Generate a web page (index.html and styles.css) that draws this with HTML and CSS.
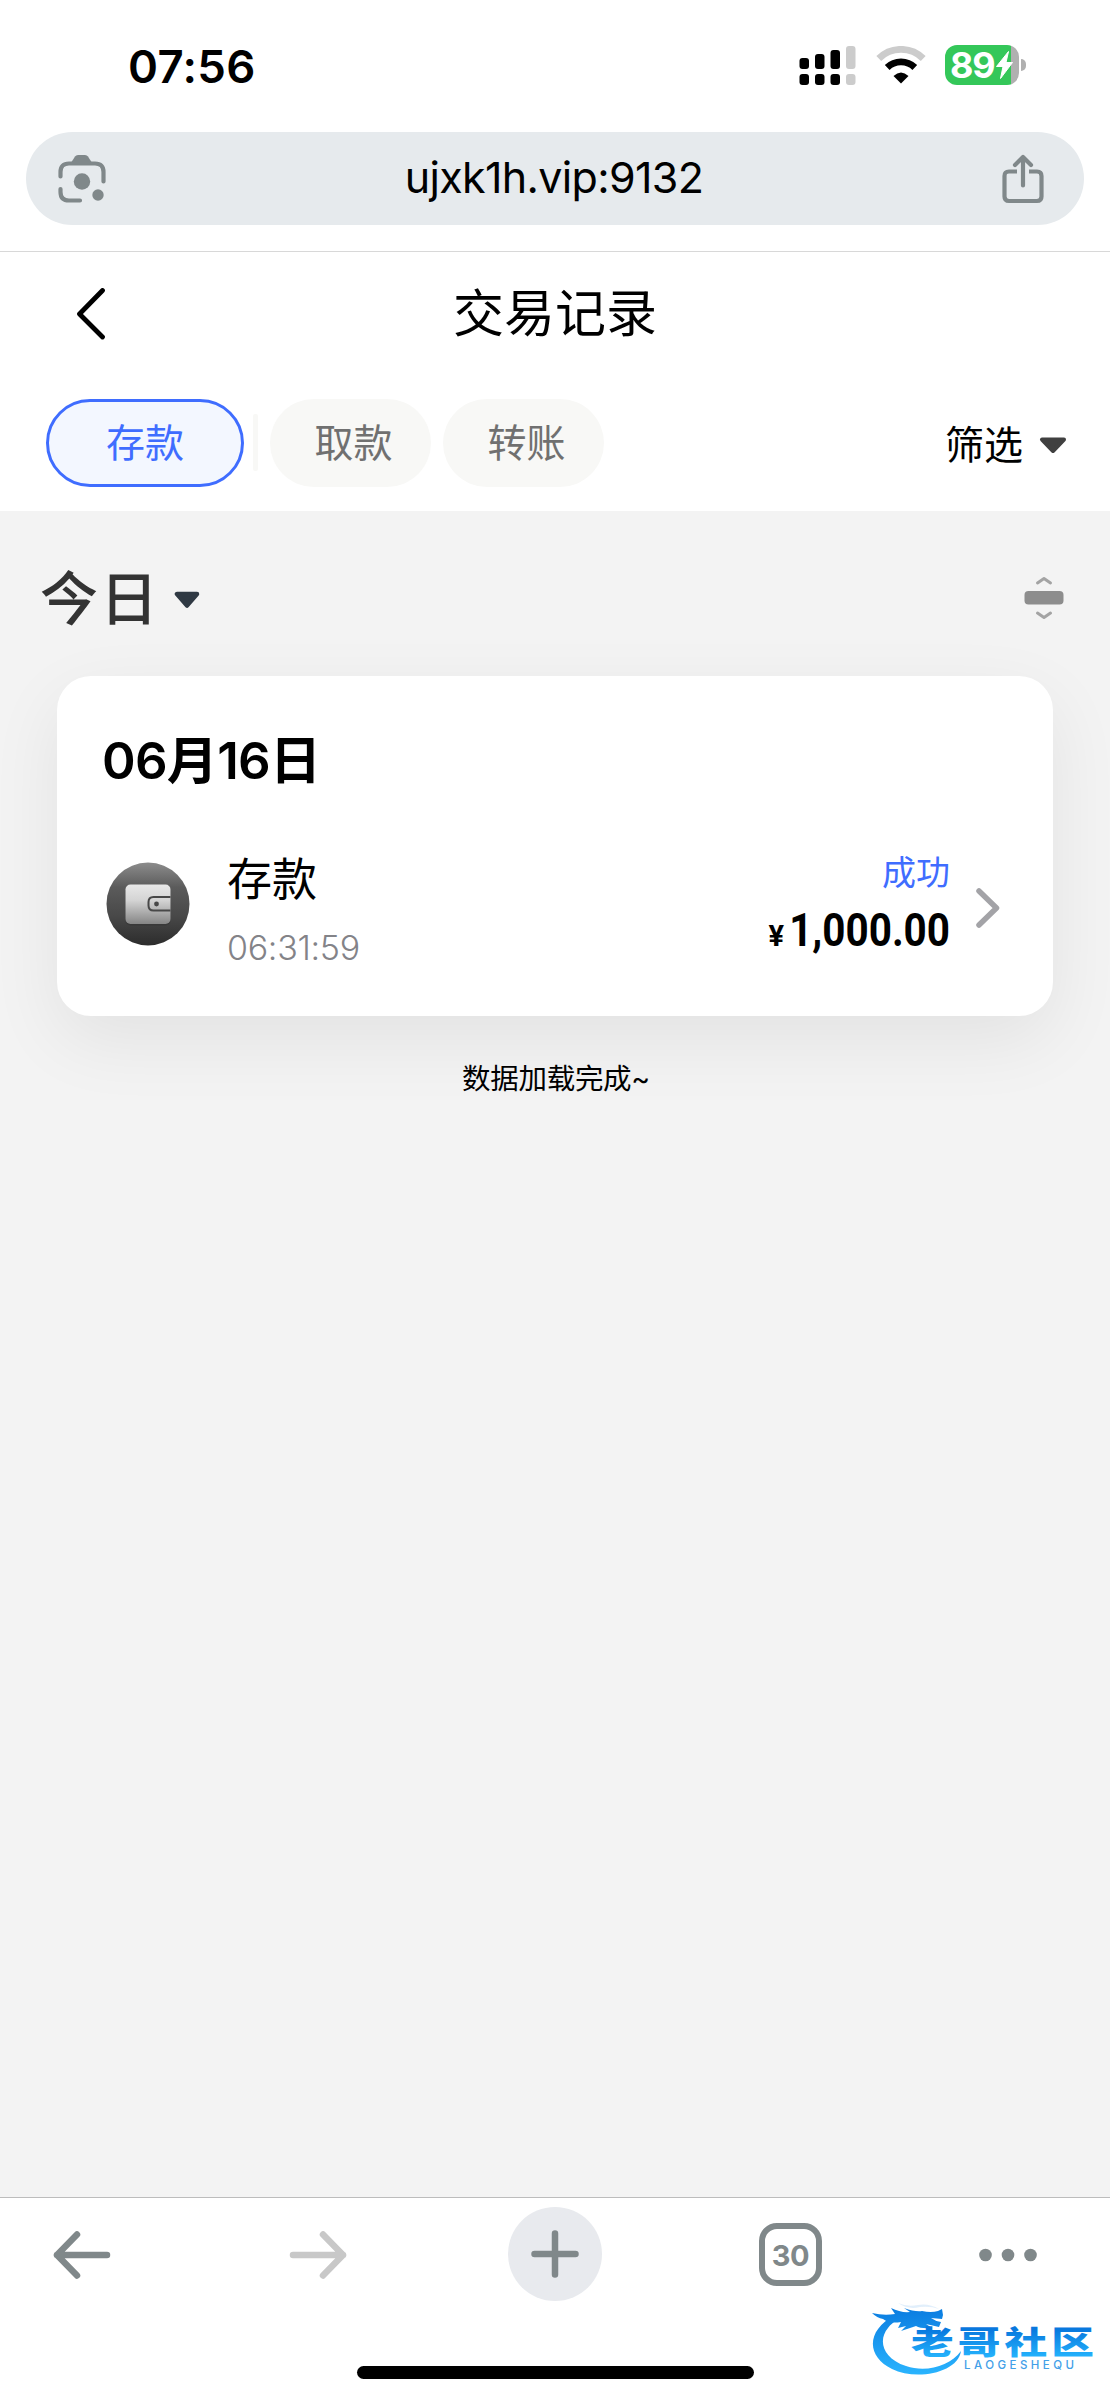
FILE: index.html
```html
<!DOCTYPE html>
<html lang="zh-CN">
<head>
<meta charset="utf-8">
<title>交易记录</title>
<link rel="stylesheet" href="styles.css">
</head>
<body>
<div class="screen">
  <div class="status">
    <span class="clock">07:56</span>
    <div class="status-icons">
      <svg class="signal" width="58" height="40" viewBox="0 0 58 40">
        <rect x="0.500" y="13" width="9.500" height="11" rx="3"/><rect x="16" y="9" width="9.500" height="15" rx="3"/><rect x="31.500" y="5" width="9.500" height="19" rx="3"/>
        <rect x="0.500" y="29" width="9.500" height="11" rx="3"/><rect x="16" y="29" width="9.500" height="11" rx="3"/><rect x="31.500" y="29" width="9.500" height="11" rx="3"/>
        <rect x="47" y="1" width="9.500" height="23" rx="3" fill="#ccc"/><rect x="47" y="29" width="9.500" height="11" rx="3" fill="#ccc"/>
      </svg>
      <svg class="wifi" width="50" height="38" viewBox="0 0 50 38">
        <path d="M2.800 12.500A31.500 31.500 0 0 1 47.200 12.500" fill="none" stroke="#ccc" stroke-width="6.800"/>
        <path d="M11.200 21.500A19.800 19.800 0 0 1 38.800 21.500" fill="none" stroke="#000" stroke-width="6.800"/>
        <path d="M25 37.500L17.500 30Q25 23 32.500 30Z"/>
      </svg>
      <div class="battery"><span class="battery-level">89</span>
        <svg class="bolt" width="17" height="28" viewBox="0 0 17 28"><path d="M12.500 0.500L0.500 15.500H7L4.500 27.500L16.500 11.500H10Z" fill="#fff" stroke="#fff" stroke-linejoin="round"/></svg>
      </div>
      <span class="battery-nub"></span>
    </div>
  </div>

  <div class="address">
    <svg width="48" height="50" viewBox="0 0 48 50" fill="#80888a">
      <path d="M13.500 8L17 2.500Q18 1 20 1H27Q29 1 30 2.500L33.500 8V11H13.500Z"/>
      <path d="M2.500 22.500V18Q2.500 9.500 11 9.500H37Q45.500 9.500 45.500 18V27.500M2.500 35V38Q2.500 46.500 11 46.500H22" fill="none" stroke="#80888a" stroke-width="4.200" stroke-linecap="round"/>
      <circle cx="24" cy="27.500" r="8.200"/><circle cx="40" cy="41" r="5.700"/>
    </svg>
    <span class="url">ujxk1h.vip:9132</span>
    <svg width="42" height="50" viewBox="0 0 42 50" fill="none" stroke="#80888a" stroke-width="4.200">
      <path d="M15 17.500H7Q2.500 17.500 2.500 22V42.500Q2.500 47 7 47H35Q39.500 47 39.500 42.500V22Q39.500 17.500 35 17.500H27"/>
      <path d="M21 31.500V4M13 11L21 3L29 11" stroke-linecap="round" stroke-linejoin="round"/>
    </svg>
  </div>

  <div class="titlebar">
    <svg class="back" width="30" height="52" viewBox="0 0 30 52"><path d="M26.500 2.500L3.500 26L26.500 49" fill="none" stroke="#000" stroke-width="4.800" stroke-linecap="round" stroke-linejoin="round"/></svg>
    <h1>交易记录</h1>
  </div>

  <div class="tabs">
    <span class="tab tab-active">存款</span>
    <span class="tab-divider"></span>
    <span class="tab">取款</span>
    <span class="tab">转账</span>
    <span class="filter">筛选</span>
    <svg class="filter-arrow" width="28" height="17" viewBox="0 0 28 17"><path d="M3 2.500H25L14 14Z" fill="#404040" stroke="#404040" stroke-width="4" stroke-linejoin="round"/></svg>
  </div>

  <div class="records">
    <div class="day">
      <span class="day-name">今日</span>
      <svg class="day-arrow" width="26" height="18" viewBox="0 0 26 18"><path d="M3 3H23L13 14.500Z" fill="#2f3943" stroke="#2f3943" stroke-width="4.500" stroke-linejoin="round"/></svg>
      <svg class="collapse" width="40" height="44" viewBox="0 0 40 44" fill="none" stroke="#a3a3a3" stroke-width="3" stroke-linecap="round" stroke-linejoin="round"><path d="M13.500 7L20 2.500L26.500 7M13.500 37L20 41.500L26.500 37"/><rect x="0.500" y="15" width="39" height="13.500" rx="4" fill="#8d8d8d" stroke="none"/></svg>
    </div>

    <div class="card">
      <h2>06月16日</h2>
      <div class="row">
        <svg class="wallet" width="84" height="84" viewBox="0 0 84 84">
          <defs>
            <linearGradient id="disc" x1="0" y1="0" x2="0" y2="1"><stop offset="0" stop-color="#8c8c8c"/><stop offset=".3" stop-color="#5b5b5b"/><stop offset=".65" stop-color="#484848"/><stop offset="1" stop-color="#2c2c2c"/></linearGradient>
            <linearGradient id="purse" x1="0" y1="0" x2="0" y2="1"><stop offset="0" stop-color="#e8e8e8"/><stop offset=".4" stop-color="#d4d4d4"/><stop offset="1" stop-color="#858585"/></linearGradient>
          </defs>
          <circle cx="42" cy="42" r="41.500" fill="url(#disc)"/>
          <rect x="19.500" y="24" width="45" height="39.500" rx="5" fill="#222" opacity=".25"/>
          <rect x="19.500" y="22.500" width="45" height="39.500" rx="5" fill="url(#purse)"/>
          <path d="M64.500 35H47.500Q42.500 35 42.500 40V43.500Q42.500 48.500 47.500 48.500H64.500" fill="none" stroke="#484848" stroke-width="2"/>
          <circle cx="50.500" cy="42" r="2.400" fill="#484848"/>
        </svg>
        <div class="kind"><span class="kind-name">存款</span><span class="kind-time">06:31:59</span></div>
        <div class="result"><span class="result-state">成功</span><span class="amount"><span class="yen">¥</span><span class="number">1,000.00</span></span></div>
        <svg class="more" width="24" height="40" viewBox="0 0 24 40"><path d="M3 3L20.500 20L3 37" fill="none" stroke="#a3a3a7" stroke-width="5.500" stroke-linecap="round" stroke-linejoin="round"/></svg>
      </div>
    </div>
    <p class="done">数据加载完成~</p>
  </div>

  <div class="toolbar">
    <svg width="58" height="48" viewBox="0 0 58 48" fill="none" stroke="#80888a" stroke-width="6.500" stroke-linecap="round" stroke-linejoin="round"><path d="M54 24H4M24 3.500L4 24L24 44.500"/></svg>
    <svg class="forward" width="58" height="48" viewBox="0 0 58 48" fill="none" stroke="#c8c8c8" stroke-width="6.500" stroke-linecap="round" stroke-linejoin="round"><path d="M4 24H54M34 3.500L54 24L34 44.500"/></svg>
    <span class="add"><svg width="48" height="48" viewBox="0 0 48 48" stroke="#80888a" stroke-width="6.500" stroke-linecap="round"><path d="M3.500 24H44.500M24 3.500V44.500"/></svg></span>
    <span class="count">30</span>
    <svg class="dots" width="58" height="14" viewBox="0 0 58 14" fill="#80888a"><circle cx="6.500" cy="7" r="6.300"/><circle cx="29" cy="7" r="6.300"/><circle cx="51.500" cy="7" r="6.300"/></svg>
  </div>
  <div class="home"></div>

  <svg class="logo" width="230" height="90" viewBox="0 0 230 90">
    <defs>
      <linearGradient id="ring" gradientUnits="userSpaceOnUse" x1="0" y1="10" x2="0" y2="84"><stop offset="0" stop-color="#0878de"/><stop offset="1" stop-color="#2bb6ff"/></linearGradient>
      <linearGradient id="name" gradientUnits="userSpaceOnUse" x1="0" y1="-27" x2="0" y2="3"><stop offset="0" stop-color="#0878de"/><stop offset="1" stop-color="#24b2fc"/></linearGradient>
    </defs>
    <g fill="url(#ring)">
      <path d="M25 22C-5 38-3 64 22 76C46 88 88 80 91 58C80 73 56 80 36 73C12 65 8 47 18 35C23 28 31 25 40 22Z"/>
      <path d="M2 20Q14 23 25 21L21 15Q31 20 40 19L34 15Q45 19 52 18Q61 20 68 18L72 16L73 22L72 26L61 25Q65 28 71 29L69 34L56 31L62 35Q51 36 46 33L31 38L36 33L28 35L31 29Q19 31 13 26Q7 25 2 20Z"/>
      <path d="M28 10Q38 17 50 14Q61 13 69 16Q59 10 48 12Q37 14 28 10Z" opacity=".12"/>
    </g>
    <text class="logo-name" transform="translate(41 61) scale(1.22 .91)" fill="url(#name)">老哥社区</text>
    <text class="logo-latin" x="94" y="76" textLength="110">LAOGESHEQU</text>
  </svg>
</div>
</body>
</html>
```
FILE: styles.css
```css
* { box-sizing: border-box; }
body { margin: 0; background: #fff; }
svg { display: block; flex: none; }
h1, h2, p { margin: 0; font-weight: 400; }
.screen {
  position: relative;
  display: flex;
  flex-direction: column;
  width: 1110px;
  height: 2400px;
  overflow: hidden;
  font-family: Inter, "Noto Sans CJK SC", sans-serif;
  color: #000;
  white-space: nowrap;
}
.status { display: flex; justify-content: space-between; height: 132px; padding: 40px 84px 0 128px; }
.clock { font-size: 45.500px; line-height: 54px; font-weight: 600; letter-spacing: .3px; }
.status-icons { display: flex; align-items: flex-start; padding-top: 5px; }
.wifi { margin: 1px 0 0 19px; }
.battery {
  display: flex;
  align-items: center;
  width: 74px;
  height: 40px;
  margin-left: 19px;
  padding-left: 5px;
  border-radius: 12px;
  background: linear-gradient(90deg, #34c759 66px, #b0b0b0 66px);
}
.battery-level { font-size: 36px; line-height: 40px; font-weight: 700; color: #fff; letter-spacing: -1.300px; }
.bolt { margin-left: 2px; }
.battery-nub { width: 5px; height: 12px; margin: 14px 0 0 2px; border-radius: 0 6px 6px 0; background: #b0b0b0; }

.address {
  display: flex;
  align-items: center;
  justify-content: space-between;
  height: 93px;
  margin: 0 26px;
  padding: 0 40px 0 32px;
  border-radius: 47px;
  background: #e6eaed;
}
.url { margin-top: -4px; font-size: 43px; line-height: 54px; letter-spacing: -.65px; }

.titlebar {
  display: flex;
  align-items: center;
  height: 126px;
  margin-top: 26px;
  padding: 0 76px;
  border-top: 1px solid #d8d8d8;
}
.back { margin-top: -1px; }
h1 { flex: 1; margin: -2px 30px 0 0; text-align: center; font-size: 51px; line-height: 60px; }

.tabs { display: flex; align-items: center; height: 134px; padding: 0 43px 3px 46px; }
.tab {
  width: 161px;
  height: 88px;
  margin-right: 12px;
  padding-left: 6px;
  border-radius: 44px;
  background: #f8f8f6;
  color: #707070;
  font-size: 39px;
  line-height: 87px;
  text-align: center;
}
.tab-active { width: 198px; margin-right: 9px; padding: 0; border: 3px solid #3f6dff; background: #f3f7ff; color: #3f6dff; line-height: 81px; }
.tab-divider { width: 5px; height: 57px; margin-right: 12px; border-radius: 2px; background: #f8f8f6; }
.filter { margin: 4px 0 0 auto; font-size: 39px; line-height: 50px; }
.filter-arrow { margin: 6px 0 0 16px; }

.records { height: 1686px; overflow: hidden; background: #f3f3f3; }
.day { display: flex; align-items: center; height: 165px; padding: 10px 46px 0 40px; }
.day-name { font-size: 58px; line-height: 70px; font-weight: 500; color: #333; letter-spacing: 2px; }
.day-arrow { margin: 3px 0 0 14px; }
.collapse { margin: -1px 0 0 auto; }
.card {
  height: 340px;
  margin: 0 57px;
  padding: 51px 53px 0 45px;
  border-radius: 34px;
  background: #fff;
  box-shadow: 0 24px 72px rgba(0, 0, 0, .07);
}
h2 { font-size: 51px; line-height: 68px; font-weight: 600; letter-spacing: -.7px; }
.row { display: flex; align-items: flex-start; margin-top: 50px; }
.wallet { margin: 17px 0 0 4px; }
.kind { display: flex; flex-direction: column; margin-left: 37px; }
.kind-name { font-size: 45px; line-height: 70px; }
.kind-time { font-size: 34px; line-height: 66px; font-weight: 300; color: #838388; letter-spacing: -.3px; }
.result { display: flex; flex-direction: column; align-items: flex-end; margin-left: auto; }
.result-state { font-size: 34px; line-height: 55px; color: #3f6dff; }
.amount { display: flex; align-items: baseline; font-family: Roboto, sans-serif; font-weight: 700; line-height: 60px; }
.yen { font-size: 29px; margin-right: -21px; }
.number { font-size: 47px; transform: scaleX(.86); transform-origin: right; }
.more { margin: 43px 0 0 26px; }
.done { padding: 41px 0 0 2px; text-align: center; font-size: 28.500px; line-height: 44px; letter-spacing: -.3px; }

.toolbar { display: flex; align-items: flex-start; height: 169px; padding: 33px 73px 0 53px; border-top: 1px solid #bcbcbc; }
.forward { margin-left: 178px; }
.add { display: grid; place-items: center; width: 94px; height: 94px; margin: -24px 0 0 161px; border-radius: 50%; background: #e8eaee; }
.count {
  width: 63px;
  height: 63px;
  margin: -8px 0 0 157px;
  border: 6px solid #80888a;
  border-radius: 18px;
  color: #80888a;
  font-size: 29px;
  line-height: 53px;
  font-weight: 700;
  letter-spacing: -.5px;
  text-align: center;
}
.dots { margin: 17px 0 0 157px; }
.home { width: 397px; height: 13px; margin-left: 357px; border-radius: 7px; background: #000; }

.logo { position: absolute; left: 870px; top: 2293px; }
.logo-name { font: 900 35px "Noto Sans CJK SC", sans-serif; letter-spacing: 3.300px; }
.logo-latin { font: 500 11.500px Inter, sans-serif; fill: #42a0e8; }
```
